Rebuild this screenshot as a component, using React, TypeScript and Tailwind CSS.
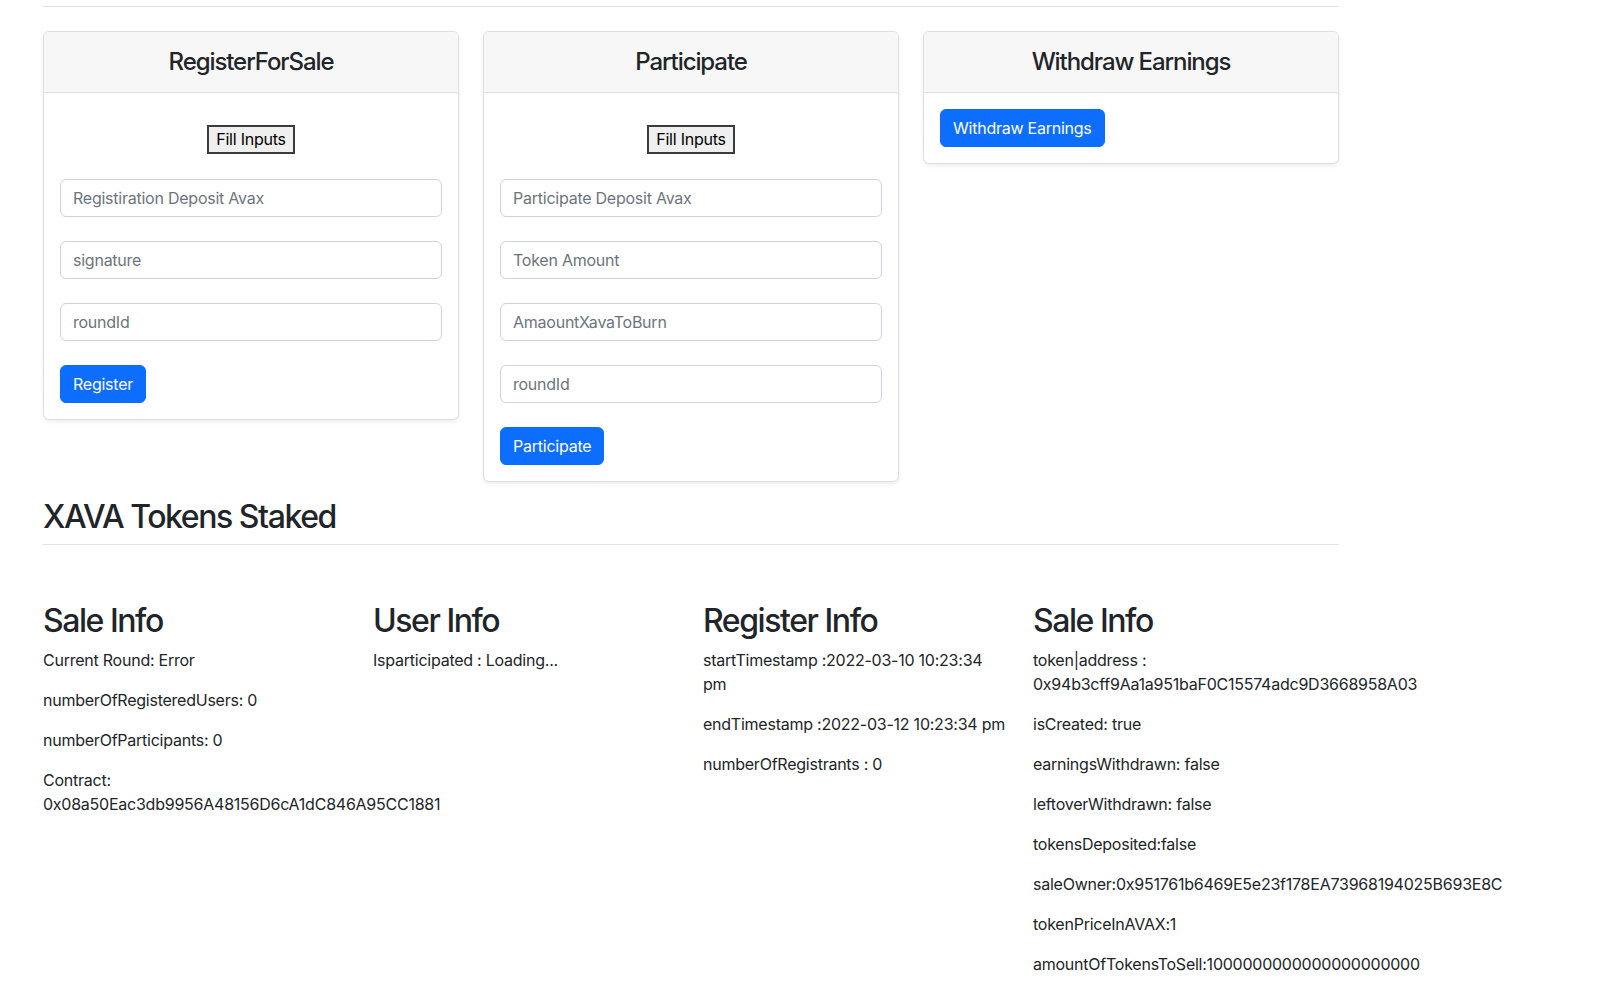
import React from "react";

// --- Types ---
interface FieldCard {
  title: string;
  fields: string[];
  action: string;
}

const formCards: FieldCard[] = [
  {
    title: "RegisterForSale",
    fields: ["Registiration Deposit Avax", "signature", "roundId"],
    action: "Register",
  },
  {
    title: "Participate",
    fields: ["Participate Deposit Avax", "Token Amount", "AmaountXavaToBurn", "roundId"],
    action: "Participate",
  },
];

const infoColumns: { title: string; lines: string[] }[] = [
  {
    title: "Sale Info",
    lines: [
      "Current Round: Error",
      "numberOfRegisteredUsers: 0",
      "numberOfParticipants: 0",
      "Contract: 0x08a50Eac3db9956A48156D6cA1dC846A95CC1881",
    ],
  },
  {
    title: "User Info",
    lines: ["Isparticipated : Loading..."],
  },
  {
    title: "Register Info",
    lines: [
      "startTimestamp :2022-03-10 10:23:34 pm",
      "endTimestamp :2022-03-12 10:23:34 pm",
      "numberOfRegistrants : 0",
    ],
  },
  {
    title: "Sale Info",
    lines: [
      "token|address : 0x94b3cff9Aa1a951baF0C15574adc9D3668958A03",
      "isCreated: true",
      "earningsWithdrawn: false",
      "leftoverWithdrawn: false",
      "tokensDeposited:false",
      "saleOwner:0x951761b6469E5e23f178EA73968194025B693E8C",
      "tokenPriceInAVAX:1",
      "amountOfTokensToSell:1000000000000000000000",
    ],
  },
];

function PrimaryButton({ label }: { label: string }) {
  return (
    <button className="h-[38px] px-3 rounded-[6px] bg-[#0d6efd] text-white text-base leading-6 border border-[#0d6efd]">
      {label}
    </button>
  );
}

function Card({ title, children }: { title: string; children: React.ReactNode }) {
  return (
    <div className="bg-white border border-[#dfdfdf] rounded-[6px] shadow-[0_2px_4px_rgba(0,0,0,0.075)] overflow-hidden">
      <div className="bg-[#f7f7f7] border-b border-[#dfdfdf] pt-4 pb-[15px] text-center">
        <h4 className="text-2xl leading-[1.2] font-medium tracking-[-0.045em] text-[#212529]">{title}</h4>
      </div>
      <div className="p-4">{children}</div>
    </div>
  );
}

function FormCard({ data }: { data: FieldCard }) {
  return (
    <Card title={data.title}>
      <div className="flex justify-center mt-4 mb-[25px]">
        <button className="h-[29px] px-[7px] border-2 border-[#3b3b3b] bg-[#efefef] text-base leading-5 text-black">
          Fill Inputs
        </button>
      </div>
      {data.fields.map((f, i) => (
        <input
          key={i}
          placeholder={f}
          className="block w-full h-[38px] mb-6 px-3 border border-[#ced4da] rounded-[6px] text-base tracking-[-0.015em] text-[#212529] placeholder:text-[#6c757d] outline-none"
        />
      ))}
      <PrimaryButton label={data.action} />
    </Card>
  );
}

export default function App() {
  return (
    <div className="min-h-screen bg-white text-[#212529] font-['Inter','Noto_Sans',sans-serif] tracking-[-0.015em] pt-[6px]">
      <div className="ml-[43px] w-[1296px]">
        <hr className="border-t border-[#e2e3e4] mb-6" />

        {/* Action cards */}
        <div className="grid grid-cols-3 gap-6 items-start">
          {formCards.map((c, i) => (
            <FormCard key={i} data={c} />
          ))}
          <Card title="Withdraw Earnings">
            <PrimaryButton label="Withdraw Earnings" />
          </Card>
        </div>

        {/* Staking section */}
        <h2 className="mt-4 text-[32px] leading-[1.2] font-medium tracking-[-0.045em]">XAVA Tokens Staked</h2>
        <hr className="border-t border-[#e2e3e4] mt-2" />

        <div className="grid grid-cols-4 gap-6 mt-[57px]">
          {infoColumns.map((col, i) => (
            <div key={i}>
              <h2 className="text-[32px] leading-[1.2] font-medium tracking-[-0.045em] mb-[7px]">{col.title}</h2>
              {col.lines.map((l, j) => (
                <p key={j} className="text-base leading-6 mb-4">
                  {l}
                </p>
              ))}
            </div>
          ))}
        </div>
      </div>
    </div>
  );
}
